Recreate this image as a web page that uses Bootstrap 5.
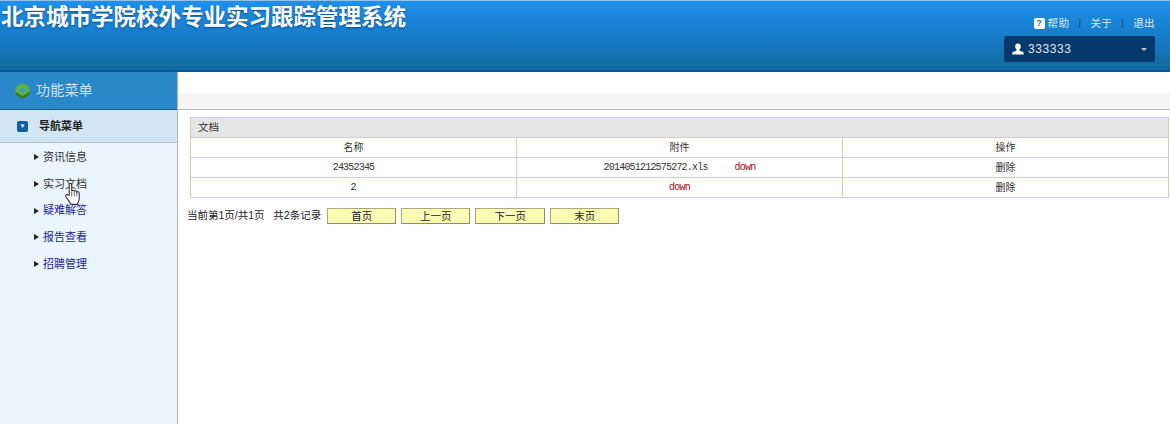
<!DOCTYPE html>
<html lang="zh">
<head>
<meta charset="utf-8">
<title>北京城市学院校外专业实习跟踪管理系统</title>
<link rel="stylesheet" href="https://cdn.jsdelivr.net/npm/bootstrap@5.3.0/dist/css/bootstrap.min.css">
<style>
html,body{height:100%;}
body{background:#fff;font-family:"Liberation Sans","Noto Sans CJK SC",sans-serif;font-size:11px;color:#222;overflow:hidden;height:424px;}
.top-bar{height:72px;background:linear-gradient(#1e90ec 0,#1a86da 25%,#1677bd 65%,#0f6a9e 97%);border-top:1px solid #8fc4ee;border-bottom:2px solid #0b4fa8;padding:0;}
.sys-title{font-size:22.5px;font-weight:700;color:#fff;line-height:30px;margin:2px 0 0 1px;text-shadow:0 1px 2px rgba(0,30,80,.55);}
.top-right{width:152px;margin-right:15px;padding-top:14px;}
.top-links{color:#dcecf8;font-size:10.5px;line-height:16px;gap:9px;letter-spacing:.4px;}
.top-links i{font-style:normal;color:#0a4d8f;font-size:10px;}
.help-ic{width:11px;height:11px;background:#fff;border-radius:2px;color:#166da8;font-size:9px;line-height:11px;text-align:center;font-weight:700;margin-right:3px;letter-spacing:0;}
.user-box{height:26px;margin-top:5px;margin-left:1px;background:#05386b;border-radius:2px;color:#e0e8f0;font-size:12px;padding:0 8px;letter-spacing:.6px;}
.caret-mini{width:0;height:0;border:3px solid transparent;border-top-color:#b9c7d5;border-bottom:0;}
.side-col{width:178px;background:#eaf5fd;border-right:1px solid #b5b5b5;position:relative;}
.fn-head{height:38px;background:#2a88c8;border-bottom:1px solid #0f5f86;color:#cfe5f5;font-size:14px;padding-left:15px;gap:6px;letter-spacing:.2px;}
.nav-head{height:33px;background:#d2e5f4;border-bottom:1px solid #b5bdc2;font-size:11px;font-weight:700;color:#222;padding-left:17px;gap:11px;}
.nav-ic{width:11px;height:11px;background:#125f9f;border-radius:2px;color:#fff;font-size:6px;line-height:11px;text-align:center;}
.side-list{padding:1px 0 0 34px;margin:0;list-style:none;}
.side-list li{height:26.7px;line-height:26.7px;display:flex;align-items:center;gap:4px;font-size:11px;color:#333;}
.side-list li.blue{color:#1e1e9e;}
.tri{width:0;height:0;border-left:5px solid #222;border-top:3px solid transparent;border-bottom:3px solid transparent;}
.hand{position:absolute;left:64px;top:110px;}
.main-col{min-width:0;}
.strip-a{height:21px;background:#fff;}
.strip-b{height:16px;background:#f5f5f5;border-bottom:1px solid #b8b8b8;box-sizing:content-box;}
.content-wrap{padding:7px 2px 0 9px;background:#fefefe;height:315px;}
.doc-table{width:979px;margin-left:3px;border-collapse:collapse;table-layout:fixed;font-family:"Liberation Mono","Noto Sans CJK SC",monospace;font-size:10px;color:#333;}
.doc-table th,.doc-table td{border:1px solid #cfd3a6;text-align:center;height:20px;padding:0;font-weight:400;}
.doc-table td.zh{font-size:10px;font-family:"Liberation Sans","Noto Sans CJK SC",sans-serif;}
.doc-table .cap{background:#e5e5e5;text-align:left;padding-left:7px;font-size:10.500px;font-family:"Liberation Sans","Noto Sans CJK SC",sans-serif;}
.mono-t{letter-spacing:-.8px;}
.down{color:#9c1010;letter-spacing:-.8px;}
.gap-down{margin-left:27px;}
.pager-row{margin-top:10px;font-size:10.5px;color:#222;height:16px;}
.pg-btn{width:69px;height:16px;background:#fbfbb4;border:1px solid #a9a97a;border-right-color:#8e8e6a;border-bottom-color:#8e8e6a;font-size:10.5px;line-height:14px;text-align:center;padding:0;color:#222;margin-right:5px;}
.pg-info{margin-right:6px;}
.pg-wide{width:70px;}
</style>
</head>
<body>
<header class="top-bar d-flex justify-content-between">
  <h1 class="sys-title">北京城市学院校外专业实习跟踪管理系统</h1>
  <div class="top-right flex-shrink-0">
    <div class="top-links d-flex justify-content-end align-items-center">
      <span class="d-flex align-items-center"><span class="help-ic">?</span>帮助</span><i>|</i><span>关于</span><i>|</i><span>退出</span>
    </div>
    <div class="user-box d-flex align-items-center justify-content-between">
      <span class="d-flex align-items-center gap-1">
        <svg width="12" height="12" viewBox="0 0 12 12"><path fill="#fff" d="M6 .5c1.800 0 2.800 1.300 2.800 3 0 1.300-.6 2.500-1.400 3.100v.8l3.600 1.500c.4.200.7.600.7 1.100v1.500H.3V10c0-.5.300-.9.700-1.100l3.600-1.500v-.8C3.800 6 3.200 4.800 3.200 3.500c0-1.700 1-3 2.800-3z"/></svg>
        <span>333333</span>
      </span>
      <span class="caret-mini"></span>
    </div>
  </div>
</header>
<div class="d-flex" style="height:352px">
  <aside class="side-col flex-shrink-0">
    <div class="fn-head d-flex align-items-center">
      <svg width="15" height="16" viewBox="0 0 15 16"><path fill="#63b03c" d="M7.500 0l6.800 4v8l-6.800 4L.7 12V4z"/><path fill="#2f7d2a" d="M.7 9v3l6.800 4 6.800-4V9l-6.800 4z"/><path fill="#2fa8c8" d="M3.800 5.500h7.400L7.500 11z"/></svg>
      <span>功能菜单</span>
    </div>
    <div class="nav-head d-flex align-items-center"><span class="nav-ic">▼</span><span>导航菜单</span></div>
    <ul class="side-list">
      <li><span class="tri"></span>资讯信息</li>
      <li><span class="tri"></span>实习文档</li>
      <li class="blue"><span class="tri"></span>疑难解答</li>
      <li class="blue"><span class="tri"></span>报告查看</li>
      <li class="blue"><span class="tri"></span>招聘管理</li>
    </ul>
    <svg class="hand" width="18" height="24" viewBox="0 0 16 22"><path fill="#fff" stroke="#333" stroke-width="1" d="M4.500 12V2.500c0-1.600 2.300-1.600 2.300 0V8.500c.3-1.200 2.300-1.200 2.400 .2.400-1.100 2.300-.9 2.300 .6.500-.8 2.200-.6 2.200 .9V15c0 2.500-1.200 3.500-1.700 5.500H6c-.7-2-3-4.500-4.500-7-.9-1.500 .9-2.700 2-1.500z"/><path stroke="#555" stroke-width=".8" d="M6.800 9v4M9.200 9v4M11.500 9.500v3.500"/></svg>
  </aside>
  <main class="main-col flex-grow-1">
    <div class="strip-a"></div>
    <div class="strip-b"></div>
    <div class="content-wrap">
      <table class="doc-table">
        <colgroup><col><col><col></colgroup>
        <tr><th colspan="3" class="cap">文档</th></tr>
        <tr><td class="zh">名称</td><td class="zh">附件</td><td class="zh">操作</td></tr>
        <tr><td class="mono-t">24352345</td><td><span class="mono-t">2014051212575272.xls</span><a class="down gap-down text-decoration-none">down</a></td><td class="zh">删除</td></tr>
        <tr><td>2</td><td><a class="down text-decoration-none">down</a></td><td class="zh">删除</td></tr>
      </table>
      <div class="pager-row d-flex align-items-center">
        <span class="pg-info">当前第1页/共1页&nbsp;&nbsp;&nbsp;共2条记录</span>
        <button class="pg-btn" type="button">首页</button>
        <button class="pg-btn" type="button">上一页</button>
        <button class="pg-btn pg-wide" type="button">下一页</button>
        <button class="pg-btn" type="button">末页</button>
      </div>
    </div>
  </main>
</div>
<script src="https://cdn.jsdelivr.net/npm/bootstrap@5.3.0/dist/js/bootstrap.bundle.min.js"></script>
</body>
</html>
